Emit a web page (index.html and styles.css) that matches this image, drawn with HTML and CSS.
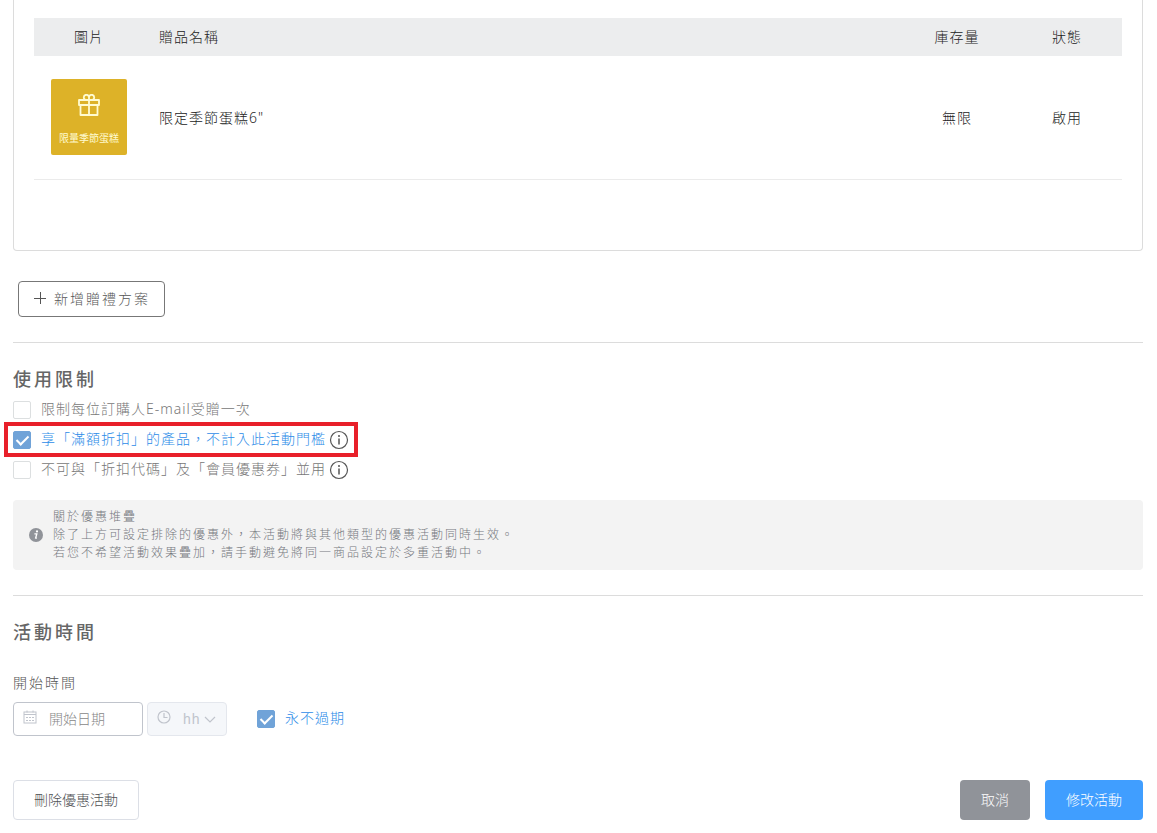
FILE: index.html
```html
<!DOCTYPE html>
<html lang="zh-Hant">
<head>
    <meta charset="UTF-8">
    <meta name="viewport" content="width=device-width, initial-scale=1.0">
    <title>贈禮活動設定</title>
    <link rel="stylesheet" href="styles.css">
</head>
<body>
    <form class="page">
        <section class="gift-panel">
            <table class="gift-table">
                <thead>
                    <tr>
                        <th class="col-image">圖片</th>
                        <th class="col-name">贈品名稱</th>
                        <th class="col-stock">庫存量</th>
                        <th class="col-status">狀態</th>
                    </tr>
                </thead>
                <tbody>
                    <tr>
                        <td class="col-image">
                            <div class="thumb">
                                <svg width="22" height="22" viewBox="0 0 22 22" fill="none" stroke="currentColor" stroke-width="1.8" stroke-linejoin="round">
                                    <rect x="1" y="6" width="20" height="5"/>
                                    <path d="M2.5 11v10h17V11M11 6V21"/>
                                    <path d="M11 6H8.2a2.6 2.6 0 1 1 2.8-2.6A2.6 2.6 0 1 1 13.8 6H11V3.4"/>
                                </svg>
                                <span>限量季節蛋糕</span>
                            </div>
                        </td>
                        <td class="col-name">限定季節蛋糕6"</td>
                        <td class="col-stock">無限</td>
                        <td class="col-status">啟用</td>
                    </tr>
                </tbody>
            </table>
        </section>

        <button type="button" class="btn btn-add">
            <svg width="12" height="12" viewBox="0 0 12 12" stroke="currentColor"><path d="M0 6.5h12M6.5 0v12"/></svg>
            新增贈禮方案
        </button>

        <section class="section">
            <h2>使用限制</h2>
            <div class="option">
                <input type="checkbox" id="once">
                <label for="once">限制每位訂購人E-mail受贈一次</label>
            </div>
            <div class="option highlight">
                <input type="checkbox" id="threshold" checked>
                <label for="threshold">享「滿額折扣」的產品，不計入此活動門檻</label>
                <svg class="info" width="20" height="20" viewBox="0 0 20 20"><circle cx="10" cy="10" r="8.5" fill="none" stroke="currentColor" stroke-width="1.2"/><path d="M10 8.5v6" stroke="currentColor" stroke-width="1.5"/><circle cx="10" cy="6" r="1" fill="currentColor"/></svg>
            </div>
            <div class="option">
                <input type="checkbox" id="coupon">
                <label for="coupon">不可與「折扣代碼」及「會員優惠券」並用</label>
                <svg class="info" width="20" height="20" viewBox="0 0 20 20"><circle cx="10" cy="10" r="8.5" fill="none" stroke="currentColor" stroke-width="1.2"/><path d="M10 8.5v6" stroke="currentColor" stroke-width="1.5"/><circle cx="10" cy="6" r="1" fill="currentColor"/></svg>
            </div>
            <div class="notice">
                <svg width="14" height="14" viewBox="0 0 14 14"><circle cx="7" cy="7" r="7" fill="currentColor"/><circle cx="8" cy="3.4" r="1.1" fill="#fff"/><path d="M5.4 5.8h2.5L6.7 10.2h1.2M7.7 5.8L6.4 10.6" fill="none" stroke="#fff" stroke-width="1.2"/></svg>
                <p>關於優惠堆疊<br>除了上方可設定排除的優惠外，本活動將與其他類型的優惠活動同時生效。<br>若您不希望活動效果疊加，請手動避免將同一商品設定於多重活動中。</p>
            </div>
        </section>

        <section class="section">
            <h2>活動時間</h2>
            <label class="field-label" for="start-date">開始時間</label>
            <div class="time-row">
                <div class="field field-date">
                    <svg class="field-icon" width="14" height="14" viewBox="0 0 14 14" fill="none" stroke="currentColor"><rect x="1" y="2" width="12" height="11"/><path d="M1 4.5h12M4 .5v2M10 .5v2"/><path d="M3 7.5h2m1 0h2m1 0h2M3 10.5h2m1 0h2m1 0h2"/></svg>
                    <input type="text" id="start-date" placeholder="開始日期">
                </div>
                <div class="field field-hour">
                    <svg class="field-icon" width="14" height="14" viewBox="0 0 14 14" fill="none" stroke="currentColor" stroke-width="1.2"><circle cx="7" cy="7" r="6"/><path d="M7 3v4.5h3.5"/></svg>
                    <select aria-label="開始時刻" disabled>
                        <option>hh</option>
                    </select>
                    <svg class="field-arrow" width="12" height="8" viewBox="0 0 12 8" fill="none" stroke="currentColor" stroke-width="1.2"><path d="M1 1l5 5 5-5"/></svg>
                </div>
                <div class="option option-forever">
                    <input type="checkbox" id="forever" checked>
                    <label for="forever">永不過期</label>
                </div>
            </div>
        </section>

        <div class="actions">
            <button type="button" class="btn btn-delete">刪除優惠活動</button>
            <button type="button" class="btn btn-cancel">取消</button>
            <button type="submit" class="btn btn-submit">修改活動</button>
        </div>
    </form>
</body>
</html>
```

FILE: styles.css
```css
*, *::before, *::after { box-sizing: border-box; }
body { margin: 0; background: #fff; color: #555; font-family: "Noto Sans", "Noto Sans CJK TC", sans-serif; font-size: 14px; font-weight: 300; }
button, input, select { font: inherit; }
svg { flex: none; }
.page { padding: 0 14px 13px 13px; }

/* Gift list */
.gift-panel { padding: 18px 20px 70px; border: 1px solid #dcdcdc; border-top: none; border-radius: 0 0 4px 4px; }
.gift-table { width: 100%; border-collapse: collapse; table-layout: fixed; color: #222; letter-spacing: 1px; }
.gift-table th { height: 38px; padding: 0 0 2px; background: #ecedee; font-weight: 300; }
.gift-table td { height: 123px; padding: 0; border-bottom: 1px solid #ebebeb; }
.gift-table .col-name { padding-left: 15px; text-align: left; }
.col-image, .col-stock, .col-status { width: 110px; text-align: center; }
.thumb { display: flex; flex-direction: column; align-items: center; justify-content: space-between; width: 76px; height: 76px; margin: 0 auto; padding: 15px 0 10px; border-radius: 2px; background: #ddb228; color: #fffbd0; font-size: 10px; font-weight: 400; line-height: 14px; letter-spacing: 0; }

/* Buttons */
.btn { height: 40px; padding: 0 20px 2px; border: 1px solid transparent; border-radius: 4px; color: #fff; cursor: pointer; }
.btn-add { display: flex; align-items: center; gap: 8px; height: 36px; margin: 30px 0 25px 5px; padding: 0 14px 2px 15px; border-color: #777; background: #fff; color: #555; letter-spacing: 2px; }
.btn-delete { margin-right: auto; border-color: #dcdfe6; background: #fff; color: #505255; }
.btn-cancel { background: #909399; }
.btn-submit { background: #409eff; }
.actions { display: flex; gap: 15px; margin-top: 44px; }

/* Sections */
.section { padding-top: 24px; border-top: 1px solid #dcdcdc; }
h2 { margin: 0 0 4px; color: #666; font-size: 18px; font-weight: 500; line-height: 24px; letter-spacing: 3px; }
.option { position: relative; display: flex; align-items: center; height: 30px; color: #777; letter-spacing: 1px; }
.option label { margin-left: 10px; padding-bottom: 2px; line-height: 20px; }
.option input { position: relative; flex: none; width: 18px; height: 18px; margin: 0; appearance: none; border: 1px solid #dcdfe0; border-radius: 2px; background: #fff; }
.option input:checked { border-color: #70a3d8; background: #70a3d8; }
.option input:checked::after { content: ""; position: absolute; top: 1px; left: 5px; width: 7px; height: 12px; border: solid #fff; border-width: 0 2px 2px 0; transform: rotate(45deg); }
.option input:checked + label { color: #2d8ce8; }
.info { margin-left: 3px; color: #555; }
.highlight::before { content: ""; position: absolute; top: -3px; left: -9px; width: 354px; height: 35px; border: 4px solid #e8202a; pointer-events: none; }
.notice { display: flex; align-items: center; gap: 10px; margin: 15px 0 25px; padding: 8px 16px; border-radius: 4px; background: #f3f3f3; color: #909399; font-size: 12px; line-height: 18px; letter-spacing: 2px; }
.notice p { margin: 0; color: #75787e; }

/* Start time */
.field-label { display: block; margin: 28px 0 8px; line-height: 22px; letter-spacing: 2px; }
.time-row { display: flex; align-items: center; gap: 4px; }
.field { position: relative; color: #c0c4cc; }
.field input, .field select { display: block; width: 100%; height: 34px; padding: 0 8px 0 35px; appearance: none; border: 1px solid #c0c4cc; border-radius: 4px; background: #fff; color: #606266; }
.field input::placeholder { color: #888; }
.field select { border-color: #e4e7ed; background: #f5f7fa; color: #c0c4cc; opacity: 1; font-family: "Liberation Sans", sans-serif; letter-spacing: 1px; }
.field-date { width: 130px; }
.field-hour { width: 80px; }
.field-icon { position: absolute; top: 8px; left: 10px; }
.field-arrow { position: absolute; top: 14px; right: 11px; }
.option-forever { margin-left: 26px; }
```
